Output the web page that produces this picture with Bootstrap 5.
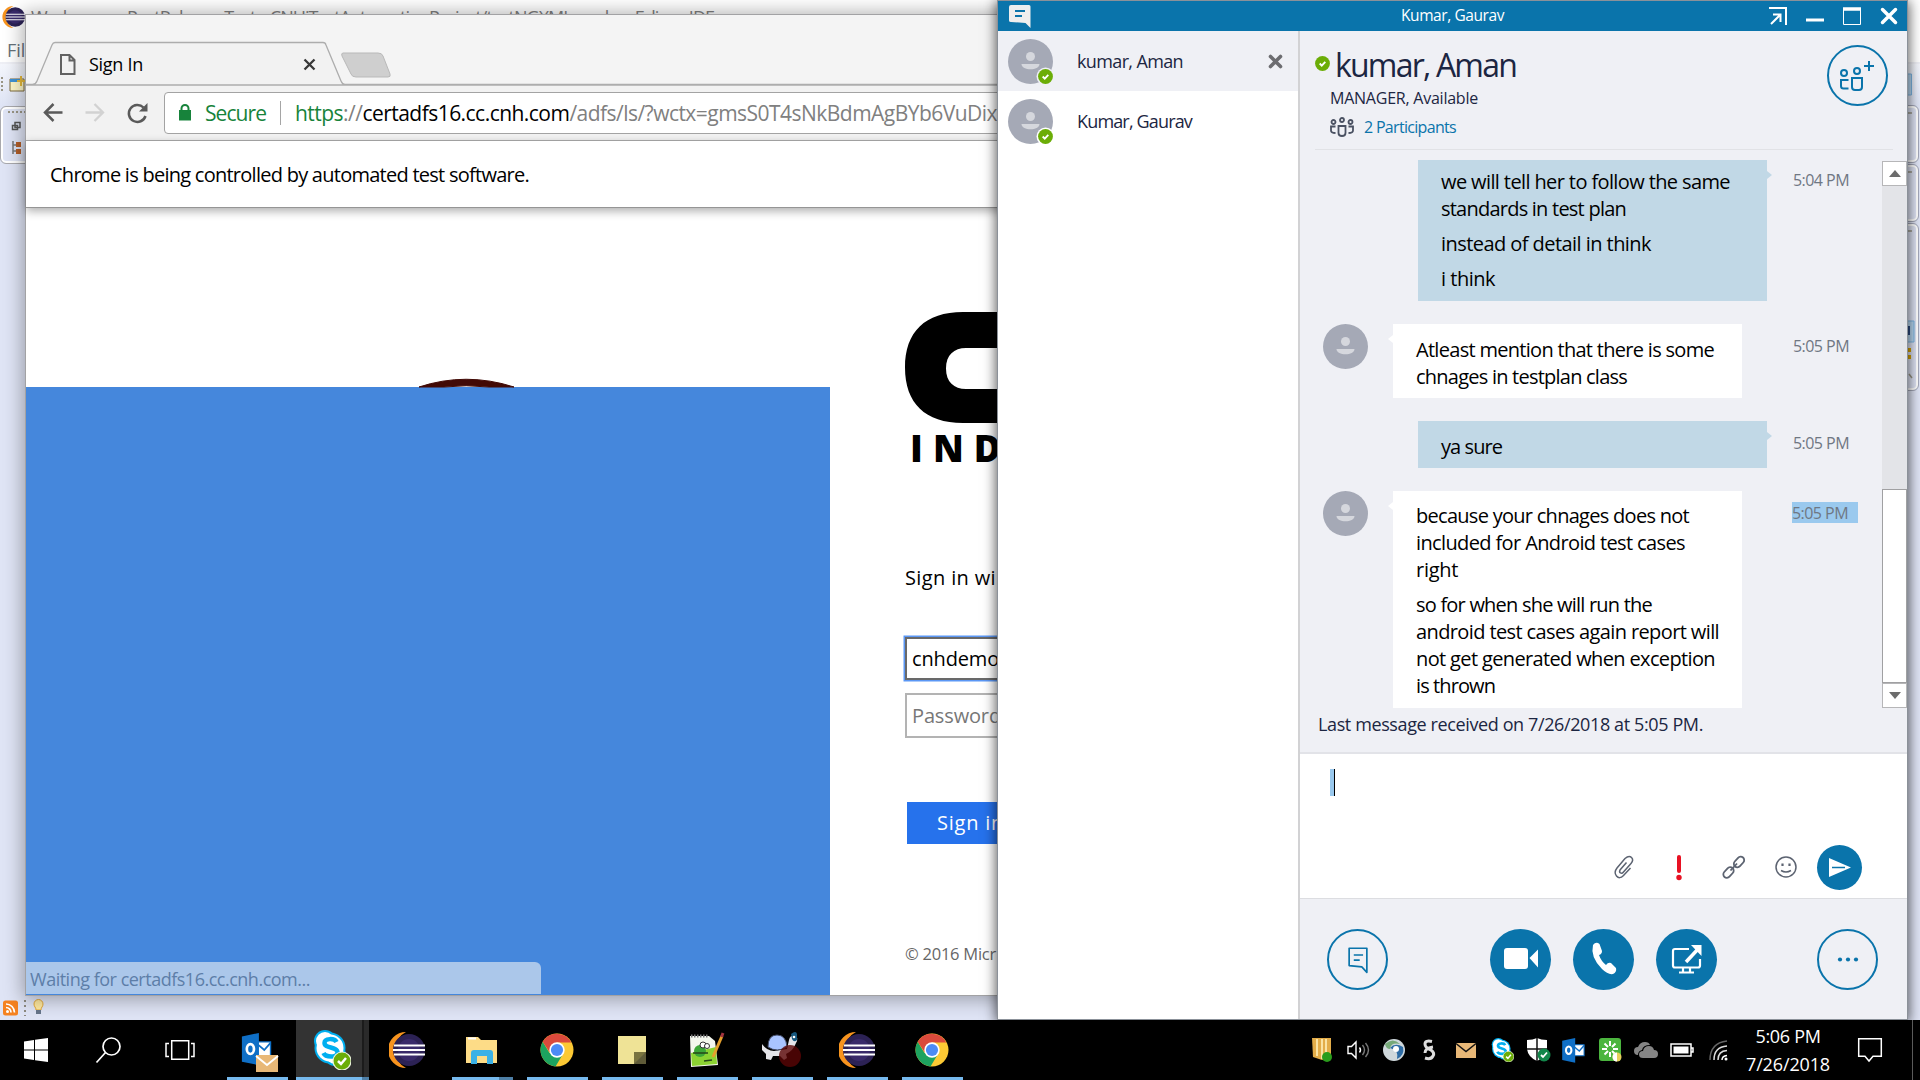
<!DOCTYPE html>
<html lang="en">
<head>
<meta charset="utf-8">
<title>Desktop</title>
<link href="https://cdn.jsdelivr.net/npm/bootstrap@5.3.0/dist/css/bootstrap.min.css" rel="stylesheet">
<style>
body{width:1920px;height:1080px;overflow:hidden;background:#dfe4f5;font-family:"Open Sans","Noto Sans",sans-serif;line-height:1;color:#000}
svg{display:block;flex:none;overflow:visible}
.t{display:inline-block;white-space:nowrap}
.desk{height:1020px;overflow:hidden}
.win{position:absolute}
/* eclipse */
.ec-title{height:30px;background:#fff;padding:8px 0 0 31px;font-size:18px;color:#808080}
.ec-menu{height:34px;background:#fff;padding:11px 0 0 7px;font-size:18px;color:#66727a;border-bottom:2px solid #eeeff5}
.ec-tool{height:42px;background:linear-gradient(#f4f6fc,#dfe4f5)}
.ec-logo{position:absolute;left:2px;top:6px}
.ec-side{position:absolute;left:0;top:106px;width:40px;height:58px;border:1.5px solid #a9a9ad;border-radius:6px;box-shadow:inset 0 0 0 2px #fff;background:#dfe4f5}
.ec-trim{position:absolute;right:1px;width:30px;border:1px solid #a5a9ba;border-radius:6px;box-shadow:inset 0 0 0 2px #fff}
.ec-status{position:absolute;left:3px;top:999px}
/* browser */
.chrome-win{left:26px;top:15px;width:990px;height:980px;background:#fff;box-shadow:0 0 0 1px #a2a2a4,0 1px 18px 3px rgba(0,0,0,.33)}
.strip{height:70px;background:#f4f4f4;position:relative}
.tab-body{padding:28px 0 0 34px;gap:14px;height:70px;position:relative}
.tools{height:56px;background:#f2f2f2;border-bottom:1px solid #adadad;padding:7px 0 7px 17px}
.omni{height:42px;border:1.5px solid #a3a3a3;border-radius:4px;background:#fff;font-size:21px;color:#808080}
.omni .t{padding-top:2px}
.green{color:#17833b}
.infobar{height:67px;border-bottom:1.5px solid #959595;padding:2px 24px 0;font-size:20px;box-shadow:0 3px 9px rgba(0,0,0,.33);position:relative}
.hero{width:804px}
.hero-blue{background:#4587dc;height:608px}
.hero-top{height:179px;padding-left:393px}
.signin{padding-left:75px;width:186px;font-size:20px}
.logo-word{height:45px;padding:6px 0 0 5px;margin-bottom:100px;font-size:37px;font-weight:800;letter-spacing:10px;white-space:nowrap}
.ctl{height:45px;width:170px;border:2px solid #b3b3b3;padding-left:5px;margin-top:13px;color:#777;background:#fff}
.ctl.on{height:43px;border-color:#696969;box-shadow:0 0 0 1.5px #5b97f5;margin-top:49px;color:#000}
.sbtn{margin:64px 0 0 2px;height:42px;width:150px;background:#2672ec;color:#fff;padding-left:30px}
.legal{margin-top:102px;font-size:16.5px;color:#666}
.bubble-status{position:absolute;left:0;bottom:1px;width:515px;height:32px;background:#abc7ea;border-radius:0 6px 0 0;color:#5d7ea8;font-size:18px;padding:2px 0 0 4px}
/* messenger */
.im{left:997px;top:0;width:911px;height:1020px;border:1px solid #8b9199;background:#fff;box-shadow:0 2px 12px 1px rgba(0,0,0,.65)}
.im-title{height:30px;background:#0a74ab;color:#fff;font-size:15.5px}
.im-list{width:302px;border-right:2px solid #d2d2d4}
.im-row{height:60px;padding:0 14px 0 10px;font-size:18px;color:#1c2642}
.im-row .t{margin:-1px 0 0 24px}
.im-row.active{background:#eff0f5}
.im-main{background:#eff0f5}
.im-head{height:119px;position:relative;padding:20px 19px 0 15px;color:#1c2642}
.im-head:after{content:"";position:absolute;left:15px;right:14px;bottom:0;height:1px;background:#e1e2e6}
.feed{height:559px;padding-top:10px;overflow:hidden}
.msgs{width:582px}
.msg{margin-bottom:23px}
.bub{width:349px;background:#fff;padding:12px 0 0 23px;font-size:20px;position:relative}
.bub p{margin:0 0 8px;line-height:27px}
.bub .t{display:block;width:max-content}
.bub.in{margin-left:25px}
.bub.out{background:#c1d8e6;margin-left:118px}
.bub.out:after,.bub.in:after{content:"";position:absolute;top:11px;border:4px solid transparent}
.bub.out:after{left:100%;border-left:5px solid #c1d8e6}
.bub.in:after{right:100%;border-right:5px solid #fff}
.tm{font-size:16px;color:#6f7783}
.time-box{margin-left:25px;padding:14px 0 0 1px}
.in + .time-box{margin-left:50px}
.sel{background:#9ac9ee;width:66px;height:21px;padding-top:3px;margin-left:-1px}
.bar{width:25px;background:#e3e4e8;margin:1px 0 1px}
.bar .end{height:25px;background:#fff;border:1px solid #b6b6b8}
.bar .thumb{height:194px;border:1px solid #a0a0a2;background:#fff}
.last{height:45px;padding:6px 0 0 18px;font-size:18px;color:#1c2642;border-bottom:2px solid #e2e3e8}
.compose{height:144.5px;background:#fff;border-bottom:1px solid #dcdde1;padding:15px 45px 8px 30px}
.caret{width:5px;height:27px;background:#9ac9ee;border-right:1px solid #000}
.disc{width:61px;height:61px;border-radius:50%;background:#0a74ab;color:#fff;display:flex;align-items:center;justify-content:center;flex:none}
.disc.line{background:none;border:2px solid #0a74ab;color:#0a74ab}
.disc.sm{width:45px;height:45px}
.calls{height:120px;padding:30px 29px 0 27px}
/* taskbar */
.task{height:60px;background:#000;color:#fff}
.tile{height:60px;width:75px;position:relative;display:flex;align-items:center;justify-content:center;flex:none}
.tile.sys{width:72px}
.tile.run:after{content:"";position:absolute;left:7px;width:61px;bottom:0;height:3px;background:#76b9ed}
.tile.cur:before{content:"";position:absolute;left:1px;width:73px;top:0;height:60px;background:linear-gradient(90deg,#333 66px,#1b1b1b 66px 68px,#2a2a2a 68px)}
.tile.cur:after{left:1px;width:73px;background:linear-gradient(90deg,#76b9ed 66px,#4e7fa6 66px)}
.tile.multi:after{background:linear-gradient(90deg,#76b9ed 47px,#4e7fa6 47px)}
.tile svg{position:relative;margin-right:2px}
.tray{width:36px;display:flex;justify-content:center;flex:none}
.clock{width:104px;font-size:18px;gap:10px}
</style>
</head>
<body>
<svg width="0" height="0" class="position-absolute">
<defs>
<symbol id="av" viewBox="0 0 45 45"><circle cx="22.500" cy="22.500" r="22.500" fill="#a5a9b6"/><circle cx="22.500" cy="17.500" r="4.500" fill="#d5d7dd"/><path d="M13.500 25h18c0 7-18 7-18 0z" fill="#d5d7dd"/></symbol>
<symbol id="ok" viewBox="0 0 16 16"><circle cx="8" cy="8" r="7.900" fill="#6bad07"/><path d="M5 8l2.200 2.200L11 6.300" fill="none" stroke="#fff" stroke-width="2"/></symbol>
<symbol id="ecl" viewBox="0 0 36 36"><path d="M17 0A18 18 0 0 0 17 36A20 20 0 0 1 17 0z" fill="#f7941e"/><circle cx="20" cy="18" r="16" fill="#2c2255"/><circle cx="20" cy="18" r="11" fill="#413178" opacity=".6"/><path d="M5 13.500h31M4 18h32M5 22.500h31" stroke="#fff" stroke-width="1.900"/></symbol>
<symbol id="gc" viewBox="0 0 34 34"><circle cx="17" cy="17" r="16.500" fill="#fcc934"/><path d="M2.700 8.700A16.500 16.500 0 0 0 15.500 33.400L23 21 17 17 9.500 20z" fill="#1da35f"/><path d="M2.700 8.700A16.500 16.500 0 0 1 31.300 9.500H17L9.500 19z" fill="#db4a3c"/><circle cx="17" cy="17" r="7.700" fill="#fff"/><circle cx="17" cy="17" r="6.100" fill="#4c8bf5"/></symbol>
<symbol id="ol" viewBox="0 0 36 38"><path d="M18 10h14v16H18z" fill="#fff" stroke="#0f6fc6" stroke-width="1.500"/><path d="M18 13l7 6 7-8" fill="none" stroke="#0f6fc6" stroke-width="2"/><path d="M0 4L19 0V36L0 32z" fill="#0f6fc6"/><ellipse cx="9.500" cy="18" rx="4" ry="5.500" fill="none" stroke="#fff" stroke-width="3"/></symbol>
<symbol id="sk" viewBox="0 0 38 40"><circle cx="12" cy="11" r="11" fill="#00aff0"/><circle cx="22" cy="25" r="11" fill="#00aff0"/><circle cx="17" cy="18" r="15.500" fill="#00aff0"/><circle cx="12" cy="11" r="9" fill="#fff"/><circle cx="22" cy="25" r="9" fill="#fff"/><circle cx="17" cy="18" r="13.500" fill="#fff"/><path d="M23.500 12c-2-4-12-4-12 1 0 6 13 3 13 9.500 0 5.500-12 5-14 .5" fill="none" stroke="#00aff0" stroke-width="4.500"/><circle cx="29" cy="31" r="9" fill="#6bad07" stroke="#eaf3da" stroke-width="1.200"/><path d="M25 31l3 3 5-6" fill="none" stroke="#fff" stroke-width="2.500"/></symbol>
<symbol id="chat" viewBox="0 0 24 32"><path d="M2 1.500h20.500V30l-6-6.500L1.500 22V1.500z" fill="none" stroke="currentColor" stroke-width="2" stroke-linejoin="round"/><path d="M7 9.500h11M7 15.500h7" stroke="currentColor" stroke-width="2"/></symbol>
</defs>
</svg>

<main class="desk position-relative">
  <div class="ec-title"><span class="t" data-w="683">Workspace - PostRelease_Tests_CNHiTestAutomationProject/testNGXMLsmoke - Eclipse IDE</span></div>
  <div class="ec-menu">File</div>
  <div class="ec-tool"></div>
  <svg class="ec-logo" width="24" height="22"><use href="#ecl"/></svg>
  <svg class="win" style="left:0;top:76px" width="26" height="18"><path d="M2 1v16" stroke="#9a9686" stroke-width="2" stroke-dasharray="2 2"/><path d="M10 3h14v12H10z" fill="#fdf6c8" stroke="#7d6a3d"/><path d="M10 3h11v3H10z" fill="#3f93d5"/><path d="M21 0v10M17 5h8" stroke="#e5b93b" stroke-width="2"/></svg>
  <div class="ec-side"></div>
  <svg class="win" style="left:8px;top:110px" width="18" height="46"><path d="M0 2h18" stroke="#9a9686" stroke-width="2" stroke-dasharray="2 2"/><path d="M7 12.500h5v5H7zM4.500 15.500h5v4h-5z" fill="#dfe4f5" stroke="#555" stroke-width="1.500"/><path d="M5 31v13M5 35h4M5 41h4" stroke="#777" stroke-width="1.500"/><path d="M8 32h5v5H8zM8 39h5v5H8z" fill="#b5602a"/></svg>
  <div class="ec-trim" style="top:105px;height:58px"></div>
  <div class="ec-trim" style="top:164px;height:58px"></div>
  <div class="ec-trim" style="top:223px;height:168px"></div>
  <svg class="win" style="left:1905px;top:74px" width="12" height="310"><path d="M-2 0h8.500v21h-8.500M-2 247h11v21h-11" fill="#b9d9f3" stroke="#7db7e6"/><path d="M0 252h5v9h-5z" fill="#2c4a80"/><path d="M0 276h6M0 283h6" stroke="#d9a400" stroke-width="4"/><path d="M3 39h4M3 98h4M3 157h4M4 300l3 4" stroke="#9a9686" stroke-width="1.500"/></svg>
  <div class="ec-status d-flex gap-1 align-items-center">
    <svg width="15" height="16"><rect width="15" height="15" y=".5" rx="2.500" fill="#f58220"/><circle cx="4.500" cy="11.500" r="1.500" fill="#fff"/><path d="M3 7.500a5 5 0 0 1 5 5M3 4a8.500 8.500 0 0 1 8.500 8.500" fill="none" stroke="#fff" stroke-width="1.700"/></svg>
    <svg width="6" height="16"><path d="M3 0v16" stroke="#8d8a80" stroke-width="2" stroke-dasharray="2 3"/></svg>
    <svg width="14" height="17"><path d="M2 5a4.500 4.500 0 0 1 9 0c0 3-2 3-2 6H4c0-3-2-3-2-6z" fill="#ffe9a0" stroke="#e3a83a"/><path d="M4 11h5v4H4z" fill="#66758a"/></svg>
  </div>

  <section class="win chrome-win">
    <div class="strip">
      <svg class="position-absolute" width="990" height="70"><path d="M0 70V69.500H6.500Q10 69 11 66L26 30Q27 27.500 29 27.500H297Q299.500 27.500 300 30L315 66Q316.500 69.500 319 69.500H990V70z" fill="#f2f2f2" stroke="#adadad" stroke-width="1.300"/><path d="M317 38h35q4 0 5 3l7 18q1 3-2 3h-32q-4 0-5-3l-9-18q-1-3 1-3z" fill="#cfcfcf" stroke="#b9b9b9"/></svg>
      <div class="tab-body d-flex align-items-center">
        <svg width="15" height="21" class="mt-n1"><path d="M1 1h8.500l5 5v14H1zM9.500 1v5.500h5" fill="none" stroke="#626262" stroke-width="2"/></svg>
        <span class="t" style="font-size:18px" data-w="54">Sign In</span>
        <svg width="11" height="11" style="margin-left:147px"><path d="M.5.5l10 10m0-10l-10 10" stroke="#383838" stroke-width="2.300"/></svg>
      </div>
    </div>
    <div class="tools d-flex align-items-center">
      <svg width="20" height="19"><path d="M19.500 9.500H2M10.500 1L2 9.500 10.500 18" fill="none" stroke="#5a5a5a" stroke-width="2.500"/></svg>
      <svg width="20" height="19" style="margin-left:22px"><path d="M.5 9.500H18M9.500 1L18 9.500 9.500 18" fill="none" stroke="#d2d2d2" stroke-width="2.300"/></svg>
      <svg width="21" height="20" style="margin-left:22px"><path d="M18.500 13A8.500 8.500 0 1 1 16.500 4.500" fill="none" stroke="#5a5a5a" stroke-width="2.500"/><path d="M20.500 0v8.500H12z" fill="#5a5a5a"/></svg>
      <div class="omni d-flex align-items-center flex-grow-1" style="margin-left:16px">
        <svg width="12" height="17" style="margin-left:14px"><path d="M0 6h12v10.500H0z" fill="#17833b"/><path d="M2.500 7V4.500a3.500 3.500 0 0 1 7 0V7" fill="none" stroke="#17833b" stroke-width="2"/></svg>
        <span class="t green" style="margin-left:14px" data-w="61">Secure</span>
        <i style="width:1px;height:24px;background:#a5a5a5;margin:0 14px"></i>
        <span class="t" data-w="702"><span class="green">https</span>://<span class="text-black">certadfs16.cc.cnh.com</span>/adfs/ls/?wctx=gmsS0T4sNkBdmAgBYb6VuDix</span>
      </div>
    </div>
    <div class="infobar d-flex align-items-center"><span class="t" data-w="479">Chrome is being controlled by automated test software.</span></div>
    <div class="d-flex">
      <div class="hero flex-shrink-0">
        <div class="hero-top"><svg width="110" height="179"><path d="M0 179Q47 163.500 95 179H70Q47 176.500 25 179z" fill="#420a06" stroke="#420a06"/></svg></div>
        <div class="hero-blue"></div>
      </div>
      <div class="signin flex-shrink-0">
        <svg width="110" height="111" style="margin-top:104px"><path d="M110 0H58C20 0 0 20 0 55.500S20 111 58 111H110V77H61C49 77 41 70 41 56.500S49 36 61 36H110z"/></svg>
        <div class="logo-word">IND</div>
        <span class="t d-block" style="width:max-content" data-w="91">Sign in wi</span>
        <div class="ctl on d-flex align-items-center"><span class="t" data-w="87">cnhdemo</span></div>
        <div class="ctl d-flex align-items-center"><span class="t" data-w="89">Password</span></div>
        <div class="sbtn d-flex align-items-center"><span class="t" data-w="67">Sign in</span></div>
        <div class="legal"><span class="t" data-w="91">© 2016 Micr</span></div>
      </div>
    </div>
    <div class="bubble-status d-flex align-items-center"><span class="t" data-w="280">Waiting for certadfs16.cc.cnh.com...</span></div>
  </section>

  <section class="win im d-flex flex-column">
    <header class="im-title d-flex align-items-center flex-shrink-0">
      <svg width="22" height="23" style="margin:1px 0 0 11px"><path d="M2 0h18q1.500 0 1.500 1.500V23l-5-5L2 17Q0 17 0 15.500V2Q0 0 2 0z" fill="#eee"/><path d="M6 6h10M6 11h7" stroke="#0a74ab" stroke-width="2"/></svg>
      <span class="t" data-w="103" style="margin-left:370px">Kumar, Gaurav</span>
      <svg width="18" height="18" style="margin-left:265px"><path d="M0 1h17v17M2 17L11 8M4 7.500h7.500V15" fill="none" stroke="#fff" stroke-width="2"/></svg>
      <svg width="18" height="18" style="margin-left:19px"><path d="M0 13h18" stroke="#fff" stroke-width="3"/></svg>
      <svg width="18" height="18" style="margin-left:19px"><path d="M.5 2h17v15.500H.5z" fill="none" stroke="#fff"/><path d="M0 2h18" stroke="#fff" stroke-width="3.500"/></svg>
      <svg width="16" height="16" style="margin-left:20px"><path d="M1.500 1.500l13 13m0-13l-13 13" stroke="#fff" stroke-width="3.500" stroke-linecap="round"/></svg>
    </header>
    <div class="d-flex flex-grow-1">
      <aside class="im-list flex-shrink-0">
        <div class="im-row active d-flex align-items-center">
          <svg width="45" height="45"><use href="#av"/><circle cx="37.500" cy="37.500" r="9" fill="#eff0f5"/><use href="#ok" x="30" y="30" width="15" height="15"/></svg>
          <span class="t" data-w="106">kumar, Aman</span>
          <svg class="ms-auto" width="13" height="13" style="margin-right:2px"><path d="M1.500 1.500l10 10m0-10l-10 10" stroke="#6c6c70" stroke-width="3.600" stroke-linecap="round"/></svg>
        </div>
        <div class="im-row d-flex align-items-center">
          <svg width="45" height="45"><use href="#av"/><circle cx="37.500" cy="37.500" r="9" fill="#fff"/><use href="#ok" x="30" y="30" width="15" height="15"/></svg>
          <span class="t" data-w="115">Kumar, Gaurav</span>
        </div>
      </aside>
      <div class="im-main flex-grow-1">
        <div class="im-head d-flex justify-content-between">
          <div>
            <div class="d-flex align-items-start"><svg width="15" height="15" style="margin:5px 5px 0 0"><use href="#ok"/></svg><span class="t" data-w="181" style="font-size:32px;margin-top:-2px">kumar, Aman</span></div>
            <div style="font-size:16px;margin:9px 0 0 15px"><span class="t" data-w="148">MANAGER, Available</span></div>
            <div class="d-flex align-items-center" style="font-size:16px;margin:11px 0 0 15px;color:#0a74ab;gap:10px">
              <svg width="24" height="20" fill="none" stroke="#4a5162" stroke-width="1.800"><circle cx="3.500" cy="5" r="2"/><circle cx="12" cy="3" r="2"/><circle cx="20.500" cy="5" r="2"/><path d="M8.500 9h7v7q0 3-3.500 3t-3.500-3zM5.500 9.500H1v4Q1 16 5.500 16M18.500 9.500H23v4q0 2.500-4.500 2.500"/></svg>
              <span class="t" data-w="92">2 Participants</span>
            </div>
          </div>
          <div class="disc line" style="margin-top:-6px"><svg width="34" height="31" style="margin-left:-1px" fill="none" stroke="currentColor" stroke-width="2"><circle cx="4" cy="13" r="3"/><circle cx="17" cy="11" r="3"/><path d="M12 18h10v9q0 3-3 3h-4q-3 0-3-3zM8.500 20H1v6q0 2.500 2.500 2.500h5M29 1v10M24 6h10"/></svg></div>
        </div>
        <div class="feed d-flex">
          <div class="msgs">
            <div class="msg d-flex"><div class="bub out" style="height:141px;padding-top:8px"><p><span class="t" data-w="289">we will tell her to follow the same</span><span class="t" data-w="185">standards in test plan</span></p><p><span class="t" data-w="210">instead of detail in think</span></p><p><span class="t" data-w="54">i think</span></p></div><div class="time-box" style="padding-top:12px"><span class="t tm" data-w="56">5:04 PM</span></div></div>
            <div class="msg d-flex"><svg width="45" height="45" style="margin-left:23px"><use href="#av"/></svg><div class="bub in" style="height:74px"><p><span class="t" data-w="298">Atleast mention that there is some</span><span class="t" data-w="211">chnages in testplan class</span></p></div><div class="time-box"><span class="t tm" data-w="56">5:05 PM</span></div></div>
            <div class="msg d-flex"><div class="bub out" style="height:47px"><p><span class="t" data-w="61">ya sure</span></p></div><div class="time-box"><span class="t tm" data-w="56">5:05 PM</span></div></div>
            <div class="msg d-flex mb-0"><svg width="45" height="45" style="margin-left:23px"><use href="#av"/></svg><div class="bub in" style="height:217px;padding-top:11px"><p><span class="t" data-w="273">because your chnages does not</span><span class="t" data-w="269">included for Android test cases</span><span class="t" data-w="42">right</span></p><p><span class="t" data-w="236">so for when she will run the</span><span class="t" data-w="303">android test cases again report will</span><span class="t" data-w="299">not get generated when exception</span><span class="t" data-w="79">is thrown</span></p></div><div class="time-box" style="padding-top:11px"><div class="sel"><span class="t tm" data-w="56">5:05 PM</span></div></div></div>
          </div>
          <div class="bar d-flex flex-column">
            <div class="end d-flex align-items-center justify-content-center"><svg width="12" height="7"><path d="M0 7L6 0l6 7z" fill="#6c6c6c"/></svg></div>
            <div class="thumb mt-auto"></div>
            <div class="end d-flex align-items-center justify-content-center"><svg width="12" height="7"><path d="M0 0l6 7 6-7z" fill="#6c6c6c"/></svg></div>
          </div>
        </div>
        <div class="last"><span class="t" data-w="385">Last message received on 7/26/2018 at 5:05 PM.</span></div>
        <div class="compose d-flex flex-column justify-content-between">
          <div class="caret"></div>
          <div class="d-flex justify-content-end align-items-center">
            <svg width="19" height="22"><path d="M12.500 6.500L6 14q-1 2 .5 3t3-1L17 7.500q3-3.500.5-6T11 2.500L3 12q-3.500 4.500-.5 8t7-.5L16.500 12" fill="none" stroke="#5c6371" stroke-width="1.500"/></svg>
            <svg width="6" height="25" style="margin-left:43px"><path d="M3 2v14" stroke="#e81123" stroke-width="4" stroke-linecap="round"/><circle cx="3" cy="22.500" r="2.700" fill="#e81123"/></svg>
            <svg width="24" height="24" style="margin-left:40px" fill="none" stroke="#5c6371" stroke-width="1.800"><rect x="-6" y="-3.500" width="12" height="7" rx="3.500" transform="translate(17 7) rotate(-48)"/><rect x="-6" y="-3.500" width="12" height="7" rx="3.500" transform="translate(6.500 17.500) rotate(-48)"/><path d="M8.500 15.500l6.500-7"/></svg>
            <svg width="22" height="22" style="margin-left:29px" fill="none" stroke="#5c6371" stroke-width="1.500"><circle cx="11" cy="11" r="10"/><path d="M6 14.500q5 3 10 0"/><path d="M7.500 7.500v2.500M14.500 7.500v2.500" stroke-width="2.200"/></svg>
            <div class="disc sm" style="margin-left:20px"><svg width="22" height="19"><path d="M0 0l22 9.500L0 19z" fill="#fff"/><path d="M3 9.500h13" stroke="#0a74ab" stroke-width="1.500"/></svg></div>
          </div>
        </div>
        <div class="calls d-flex">
          <div class="disc line"><svg width="24" height="28" class="mt-1"><use href="#chat" width="24" height="27"/></svg></div>
          <div class="disc" style="margin-left:102px"><svg width="34" height="22"><rect width="24" height="21" rx="3" fill="#fff"/><path d="M25.500 10L34 1.500v18z" fill="#fff"/></svg></div>
          <div class="disc" style="margin-left:22px"><svg width="24" height="32"><path d="M1 2Q4-2 7.500 1L10 8Q10 11 7 12Q9 18 14 22Q16 19 19 20L24 25Q25 29 21 31Q16 32 10 26Q-2 14 1 2z" fill="#fff"/></svg></div>
          <div class="disc" style="margin-left:22px"><svg width="30" height="30" fill="none" stroke="#fff" stroke-width="2.200"><path d="M17 5H3Q1 5 1 7V21.500Q1 23.500 3 23.500H26Q28 23.500 28 21.500V15M11 24v4M18 24v4M7 28.500h15"/><path d="M14 18L27 4" stroke-width="3.500"/><path d="M19 1h10.500v11z" fill="#fff" stroke="none"/></svg></div>
          <div class="disc line ms-auto"><svg width="20" height="5" fill="currentColor"><circle cx="2" cy="2.500" r="2.100"/><circle cx="10" cy="2.500" r="2.100"/><circle cx="18" cy="2.500" r="2.100"/></svg></div>
        </div>
      </div>
    </div>
  </section>
</main>

<footer class="task d-flex">
  <div class="tile sys"><svg class="m-0" width="24" height="24" fill="#fff"><path d="M0 3.500L10 2v9.500H0zM11 1.800L24 0v11.500H11zM0 12.500h10V22L0 20.500zM11 12.500h13V24L11 22.200z"/></svg></div>
  <div class="tile sys"><svg class="m-0" width="25" height="26" fill="none" stroke="#fff" stroke-width="1.700"><circle cx="15.500" cy="9.500" r="8.500"/><path d="M9.500 15.500L.5 25.500"/></svg></div>
  <div class="tile sys"><svg class="m-0" width="30" height="20" fill="none" stroke="#fff" stroke-width="1.500"><path d="M6.700.7h17v18.600h-17zM4 3.500H1v13h3M26 3.500h3v13h-3"/></svg></div>
  <div class="d-flex" style="margin-left:4px">
    <div class="tile run"><svg style="margin:5px 0 0 4px" width="38" height="40"><use href="#ol" width="34" height="34"/><path d="M15 22h22v17H15z" fill="#e8b877"/><path d="M15 23l11 9 11-9" stroke="#fff" stroke-width="2" fill="none"/></svg></div>
    <div class="tile run cur"><svg width="38" height="40"><use href="#sk"/></svg></div>
    <div class="tile"><svg width="36" height="36"><use href="#ecl"/></svg></div>
    <div class="tile run multi"><svg width="32" height="28"><path d="M0 1h12l3 3h16v23H0z" fill="#fddc87"/><path d="M2 2.500h8" stroke="#fff" stroke-width="2"/><path d="M5 28V17q0-3 3-3h16q3 0 3 3v11h-6v-8H11v8z" fill="#3bb1e6"/></svg></div>
    <div class="tile run"><svg width="34" height="34"><use href="#gc"/></svg></div>
    <div class="tile run"><svg width="28" height="28"><path d="M0 0h28v16L16 28H0z" fill="#efe396"/><path d="M16 28V16h12z" fill="#79733f"/><path d="M16 28h12V16z" fill="#5f5b38"/></svg></div>
    <div class="tile run"><svg width="34" height="34"><path d="M0 3h19l6 5 3 24-27 2z" fill="#f4f7ee"/><path d="M1 3h18" stroke="#777" stroke-width="3" stroke-dasharray="1.500 1.500"/><path d="M1 20l25-6 1 17-25 2z" fill="#8cd332"/><circle cx="10" cy="18" r="6" fill="#3da637"/><circle cx="13" cy="12" r="3" fill="#fff" stroke="#333"/><circle cx="17" cy="13" r="2.500" fill="#fff" stroke="#333"/><path d="M3 20h15M14 28l8-1" stroke="#26471a" stroke-width="1.500"/><path d="M32 3L23 24" stroke="#e5a02c" stroke-width="3"/><path d="M33 0l-1.500 4" stroke="#a3343f" stroke-width="3"/></svg></div>
    <div class="tile run"><svg width="40" height="36"><path d="M0 12q5 7 12 7l13-2 2-9q1-5 6-5 4 3 1 8-3 8-10 11l1 4-3 2-4-4-7 0-2 4-5-1 0-5-4-4z" fill="#e4e4e8"/><path d="M6 15Q6 3 15 3q9 0 10 12-10 6-19 0z" fill="#a9c4ff" stroke="#444c66"/><path d="M29 2q5-4 6 0v6q-3 3-5-1z" fill="#16577d"/><circle cx="32" cy="5" r="1.300" fill="#fff"/><circle cx="28" cy="24" r="11" fill="#5a0505" opacity=".8"/></svg></div>
    <div class="tile run"><svg width="36" height="36"><use href="#ecl"/></svg></div>
    <div class="tile run"><svg width="34" height="34"><use href="#gc"/></svg></div>
  </div>
  <div class="d-flex align-items-center ms-auto">
    <div class="tray"><svg width="20" height="24"><path d="M0 0h19v20l-9 2-9-3z" fill="#e3ad49"/><path d="M5 1v17M10 1v20M14 1v16" stroke="#fae3a3" stroke-width="2"/><circle cx="15" cy="19" r="5" fill="#2a9c1c"/></svg></div>
    <div class="tray"><svg width="23" height="20" fill="none" stroke="#fff" stroke-width="1.400"><path d="M1 6.500h3.500L9 2v16L4.500 13.500H1zM12.500 7.500q2 2.500 0 5"/><path d="M15.500 5q4 5 0 10M18.500 3q6 7 0 14" stroke="#777"/></svg></div>
    <div class="tray"><svg width="22" height="22"><circle cx="11" cy="11" r="11" fill="#cfd8dc"/><path d="M2 5q8-7 15 0-9-2-10 5-4 0-5-5z" fill="#76a979"/><path d="M7 9q5-6 13-1 2 8-6 12 2-9-7-11z" fill="#2e6ca5"/><circle cx="13" cy="10" r="3" fill="#fff"/></svg></div>
    <div class="tray" style="padding-right:4px"><svg width="13" height="22" fill="none" stroke="#ddd" stroke-width="3"><path d="M10 2.500Q3 1 3 5t6 6q4 3 2 6-2 4-8 2M11 8q-8 1-8 6"/></svg></div>
    <div class="tray"><svg width="20" height="15"><path d="M0 0h20v15H0z" fill="#e8b877"/><path d="M0 .5l10 8 10-8" stroke="#111" stroke-width="1.500" fill="none"/></svg></div>
    <div class="tray"><svg width="23" height="24"><use href="#sk"/></svg></div>
    <div class="tray"><svg width="23" height="24"><path d="M0 2q6 0 10-2 4 2 10 2v9q-1 8-10 12Q1 19 0 11z" fill="#fff"/><path d="M10 0v23M0 11h20" stroke="#111" stroke-width="1.500"/><circle cx="17" cy="17" r="6.500" fill="#12864a"/><path d="M14 17l2 2 4-4.500" fill="none" stroke="#fff" stroke-width="1.800"/></svg></div>
    <div class="tray"><svg width="24" height="24"><use href="#ol" width="25" height="26"/></svg></div>
    <div class="tray"><svg width="23" height="24"><rect width="22" height="23" rx="3" fill="#4bb53e"/><path d="M11 3v5M11 14v5M3 11h5M14 11h5M5.500 5.500L9 9M13 13l3 3M16.500 5.500L13 9M5.500 16.500L9 13" stroke="#fff" stroke-width="2"/><circle cx="18" cy="19" r="4.500" fill="#e6cf5b"/><path d="M18 14.500a4.500 4.500 0 0 0 0 9z" fill="#fff"/></svg></div>
    <div class="tray"><svg width="24" height="16" fill="#858585"><path d="M4 13q-4 0-4-4t4-4q2-5 7-5 4 0 5 3-7 0-8 5-4 1-4 5z"/><path d="M9 16q-4 0-4-3.500T9 9q1-5 6-5 4 0 5 4 4 0 4 4t-4 4z"/></svg></div>
    <div class="tray"><svg width="24" height="14"><path d="M1 1h20v12H1zM21.500 5H23v4h-1.500" fill="none" stroke="#fff" stroke-width="1.500"/><path d="M3.500 3.500h15v7h-15z" fill="#fff"/></svg></div>
    <div class="tray"><svg width="18" height="20" fill="none" stroke-width="1.500"><path d="M1 20Q1 3 18 1" stroke="#666"/><path d="M5 20Q5 7 18 6M9 20q0-9 9-9.500" stroke="#ddd"/><path d="M13 20q0-4 5-4.500" stroke="#fff"/><circle cx="17" cy="19" r="1.500" fill="#fff"/></svg></div>
    <div class="clock d-flex flex-column align-items-center"><span class="t" data-w="65">5:06 PM</span><span class="t" data-w="84">7/26/2018</span></div>
    <svg width="24" height="24" style="margin:0 30px 0 18px"><path d="M.7.700h22.600v17.500H15L11 23l-4-4.800H.7z" fill="none" stroke="#fff" stroke-width="1.500"/></svg>
    <i style="width:1px;height:60px;background:#5a5a5a;margin-right:7px"></i>
  </div>
</footer>
<script src="https://cdn.jsdelivr.net/npm/bootstrap@5.3.0/dist/js/bootstrap.bundle.min.js"></script>
<script>
// Track each label so that it fills its nominal width.
document.querySelectorAll('[data-w]').forEach(function (el) {
  var w = el.getBoundingClientRect().width;
  el.style.letterSpacing = ((el.dataset.w - w) / el.textContent.length).toFixed(3) + 'px';
});
</script>
</body>
</html>
